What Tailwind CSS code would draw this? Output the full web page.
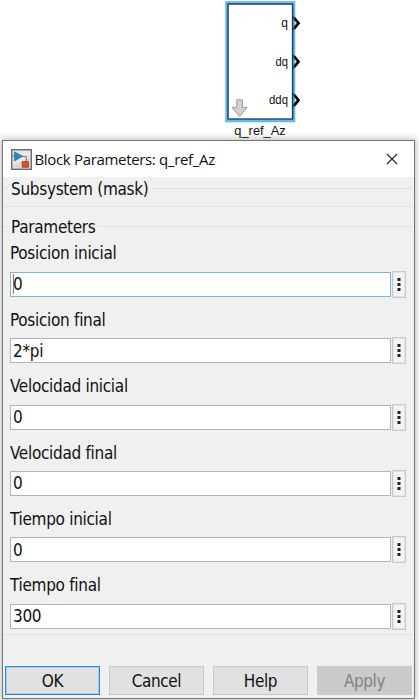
<!DOCTYPE html>
<html lang="es">
<head>
<meta charset="utf-8">
<title>Block Parameters: q_ref_Az</title>
<script src="https://cdn.jsdelivr.net/npm/@tailwindcss/browser@4"></script>
</head>
<body class="h-[700px] w-[419px] overflow-hidden bg-white text-[#111] font-['DejaVu_Sans_Condensed','DejaVu_Sans',sans-serif]">
<!-- Simulink block -->
<div class="h-[140px] pl-[225px]">
  <svg class="block" width="90" height="140" viewBox="225 0 90 140" font-family="Liberation Sans, Arial, sans-serif" fill="#111">
    <rect x="227" y="3" width="66.5" height="117.5" fill="#fff" stroke="#62baf2" stroke-width="3.6"/>
    <rect x="228" y="4" width="64.7" height="115" fill="none" stroke="#17232c" stroke-width="1.1"/>
    <g fill="none" stroke="#000" stroke-width="2.7"><path d="M294.3 18l4.2 5.2-4.2 5.2M294.3 56.5l4.2 5.2-4.2 5.2M294.3 95l4.2 5.2-4.2 5.2"/></g>
    <g fill="none" stroke="#123d5d" stroke-width="1.5"><path d="M293 16.5l2 2.5M293 30l2-2.5M293 55l2 2.5M293 68.5l2-2.5M293 93.5l2 2.5M293 107l2-2.5"/></g>
    <g font-size="12" text-anchor="end"><text x="288" y="27" textLength="6">q</text><text x="288" y="65.5" textLength="12.5" lengthAdjust="spacingAndGlyphs">dq</text><text x="288" y="104" textLength="19" lengthAdjust="spacingAndGlyphs">ddq</text></g>
    <path d="M236.8 99.8h5.6v7.6h4.8l-7.6 9-7.6-9h4.8z" fill="#d2d2d2" stroke="#9b9b9b"/>
    <text x="234.3" y="134.8" font-size="13" textLength="51.5" lengthAdjust="spacingAndGlyphs">q_ref_Az</text>
  </svg>
</div>
<!-- Dialog -->
<main class="ml-[2px] flex h-[559px] w-[413px] flex-col border border-[#747474] bg-[#f0f0f0] shadow-[0_0_7px_1px_rgba(0,0,0,0.28)]">
  <header class="flex h-[36px] shrink-0 items-center bg-white pl-[8px] pr-[16px]">
    <svg class="mt-px" width="21" height="21" viewBox="0 0 21 21"><rect x=".7" y=".7" width="19.6" height="19.6" fill="#d9d9d9" stroke="#666" stroke-width="1.3"/><path d="M2 2h17v7L2 16z" fill="#e8e8e8"/><path d="M1.5 7H4M11 7.5h4.3V13" fill="none" stroke="#777" stroke-width="1"/><path d="M3.4 2.8L11.8 7.3 3.4 12z" fill="#2788bd" stroke="#176b9e" stroke-width=".6"/><rect x="11.2" y="12.7" width="6.3" height="5.5" fill="#d7512b" stroke="#a53a1c" stroke-width=".8"/></svg>
    <h1 class="ml-[2.5px] whitespace-nowrap text-[15px] leading-[20px] tracking-[-0.33px] font-['Open_Sans','Noto_Sans',sans-serif]">Block Parameters: q_ref_Az</h1>
    <svg class="ml-auto" width="12" height="12" viewBox="0 0 12 12"><path d="M1 1l10 10M11 1L1 11" stroke="#222" stroke-width="1.1"/></svg>
  </header>
  <section class="mx-px flex h-[30px] shrink-0 flex-col border-b border-[#e1e1e1]">
    <div class="flex h-[22px] items-center"><i class="h-px w-[4px] bg-[#e1e1e1]"></i><h2 class="mx-[3px] whitespace-nowrap pt-[2px] text-[17px] leading-[22px] tracking-[-0.3px]">Subsystem (mask)</h2><i class="h-px flex-1 bg-[#e1e1e1]"></i></div>
  </section>
  <section class="mx-px mt-[8px] flex h-[420px] shrink-0 flex-col border-b border-[#e3e3e3]">
    <div class="flex h-[22px] items-center"><i class="h-px w-[4px] bg-[#e1e1e1]"></i><h2 class="mx-[3px] whitespace-nowrap pt-[2px] text-[17px] leading-[22px] tracking-[-0.3px]">Parameters</h2><i class="h-px flex-1 bg-[#e1e1e1]"></i></div>
    <div class="pl-[6px] pt-[5.4px] text-[17px] tracking-[-0.3px]">
      <div class="h-[66.4px]"><label class="block h-[28.4px] leading-[22px]">Posicion inicial</label><div class="flex items-center"><div class="flex h-[25px] w-[381px] items-center border border-[#7eb4df] bg-white pl-[2px] leading-[23px]"><i class="h-[20px] w-px bg-[#937b68]"></i><span class="-ml-px pt-px">0</span></div><div class="ml-px flex h-[27px] w-[14px] items-center justify-center border border-[#c9c9c9] bg-[#f4f4f4] shadow-[inset_0_0_0_1px_#e3e3e3]"><svg width="4" height="15" fill="#222"><path d="M.5 1h3v3h-3zM.5 6h3v3h-3zM.5 11h3v3h-3z"/></svg></div></div></div>
      <div class="h-[66.4px]"><label class="block h-[28.4px] leading-[22px]">Posicion final</label><div class="flex items-center"><div class="flex h-[25px] w-[381px] items-center border border-[#b5b5b5] bg-white pl-[2px] leading-[23px]"><span class="pt-px">2*pi</span></div><div class="ml-px flex h-[27px] w-[14px] items-center justify-center border border-[#c9c9c9] bg-[#f4f4f4] shadow-[inset_0_0_0_1px_#e3e3e3]"><svg width="4" height="15" fill="#222"><path d="M.5 1h3v3h-3zM.5 6h3v3h-3zM.5 11h3v3h-3z"/></svg></div></div></div>
      <div class="h-[66.4px]"><label class="block h-[28.4px] leading-[22px]">Velocidad inicial</label><div class="flex items-center"><div class="flex h-[25px] w-[381px] items-center border border-[#b5b5b5] bg-white pl-[2px] leading-[23px]"><span class="pt-px">0</span></div><div class="ml-px flex h-[27px] w-[14px] items-center justify-center border border-[#c9c9c9] bg-[#f4f4f4] shadow-[inset_0_0_0_1px_#e3e3e3]"><svg width="4" height="15" fill="#222"><path d="M.5 1h3v3h-3zM.5 6h3v3h-3zM.5 11h3v3h-3z"/></svg></div></div></div>
      <div class="h-[66.4px]"><label class="block h-[28.4px] leading-[22px]">Velocidad final</label><div class="flex items-center"><div class="flex h-[25px] w-[381px] items-center border border-[#b5b5b5] bg-white pl-[2px] leading-[23px]"><span class="pt-px">0</span></div><div class="ml-px flex h-[27px] w-[14px] items-center justify-center border border-[#c9c9c9] bg-[#f4f4f4] shadow-[inset_0_0_0_1px_#e3e3e3]"><svg width="4" height="15" fill="#222"><path d="M.5 1h3v3h-3zM.5 6h3v3h-3zM.5 11h3v3h-3z"/></svg></div></div></div>
      <div class="h-[66.4px]"><label class="block h-[28.4px] leading-[22px]">Tiempo inicial</label><div class="flex items-center"><div class="flex h-[25px] w-[381px] items-center border border-[#b5b5b5] bg-white pl-[2px] leading-[23px]"><span class="pt-px">0</span></div><div class="ml-px flex h-[27px] w-[14px] items-center justify-center border border-[#c9c9c9] bg-[#f4f4f4] shadow-[inset_0_0_0_1px_#e3e3e3]"><svg width="4" height="15" fill="#222"><path d="M.5 1h3v3h-3zM.5 6h3v3h-3zM.5 11h3v3h-3z"/></svg></div></div></div>
      <div class="h-[60px]"><label class="block h-[28.4px] leading-[22px]">Tiempo final</label><div class="flex items-center"><div class="flex h-[25px] w-[381px] items-center border border-[#b5b5b5] bg-white pl-[2px] leading-[23px]"><span class="pt-px">300</span></div><div class="ml-px flex h-[27px] w-[14px] items-center justify-center border border-[#c9c9c9] bg-[#f4f4f4] shadow-[inset_0_0_0_1px_#e3e3e3]"><svg width="4" height="15" fill="#222"><path d="M.5 1h3v3h-3zM.5 6h3v3h-3zM.5 11h3v3h-3z"/></svg></div></div></div>
    </div>
  </section>
  <footer class="mt-auto mb-[3px] ml-[2px] flex gap-[9px] text-[17px] leading-[26px] tracking-[-0.4px]">
    <button class="h-[29px] w-[95px] border border-[#2f86d0] bg-[#e1e1e1] pt-px shadow-[inset_0_0_0_1px_#a9cdea]">OK</button>
    <button class="h-[29px] w-[95px] border border-[#c9c9c9] bg-[#e1e1e1] pt-px">Cancel</button>
    <button class="h-[29px] w-[95px] border border-[#c9c9c9] bg-[#e1e1e1] pt-px">Help</button>
    <button class="h-[29px] w-[95px] bg-[#cbcbcb] pt-px text-[#828282]" disabled>Apply</button>
  </footer>
</main>
</body>
</html>
